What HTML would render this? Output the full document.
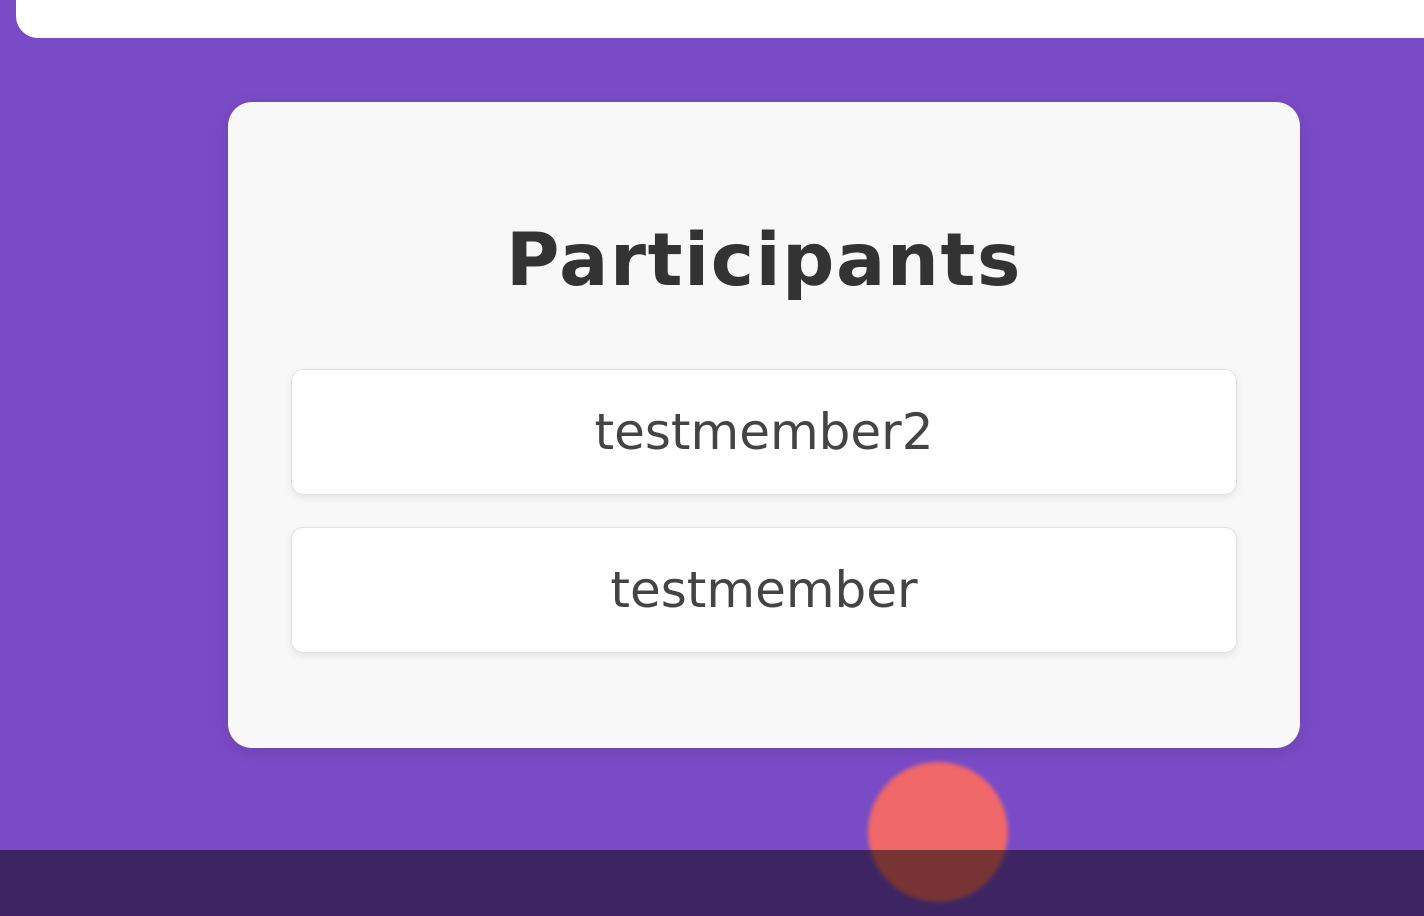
<!DOCTYPE html>
<html><head><meta charset="utf-8"><style>
html,body{margin:0;padding:0;width:1424px;height:916px;overflow:hidden;background:#7a4bc7;font-family:"DejaVu Sans","Liberation Sans",sans-serif;}
.top{position:absolute;left:16px;top:-40px;width:1450px;height:78px;background:#fff;border-radius:22px;}
.card{position:absolute;left:228px;top:102px;width:1072px;height:646px;background:#f8f8f8;border-radius:24px;box-shadow:0 4px 16px rgba(0,0,0,0.12);}
h1{position:absolute;left:228px;width:1072px;top:219px;margin:0;text-align:center;font-size:73px;letter-spacing:1.6px;font-weight:bold;color:#333;line-height:84px;}
.item{position:absolute;left:291px;width:944px;height:124px;background:#fff;border:1px solid #e2e2e2;border-radius:12px;box-shadow:0 3px 8px rgba(0,0,0,0.08);text-align:center;line-height:124px;font-size:50px;color:#444;}
.dot{position:absolute;left:868px;top:762px;width:140px;height:140px;border-radius:50%;background:#f06868;filter:blur(2px);}
.bar{position:absolute;left:0;top:850px;width:1424px;height:66px;background:rgba(0,0,0,0.5);}
</style></head><body>
<div class="top"></div>
<div class="card"></div>
<h1>Participants</h1>
<div class="item" style="top:369px">testmember2</div>
<div class="item" style="top:527px">testmember</div>
<div class="dot"></div>
<div class="bar"></div>
</body></html>
